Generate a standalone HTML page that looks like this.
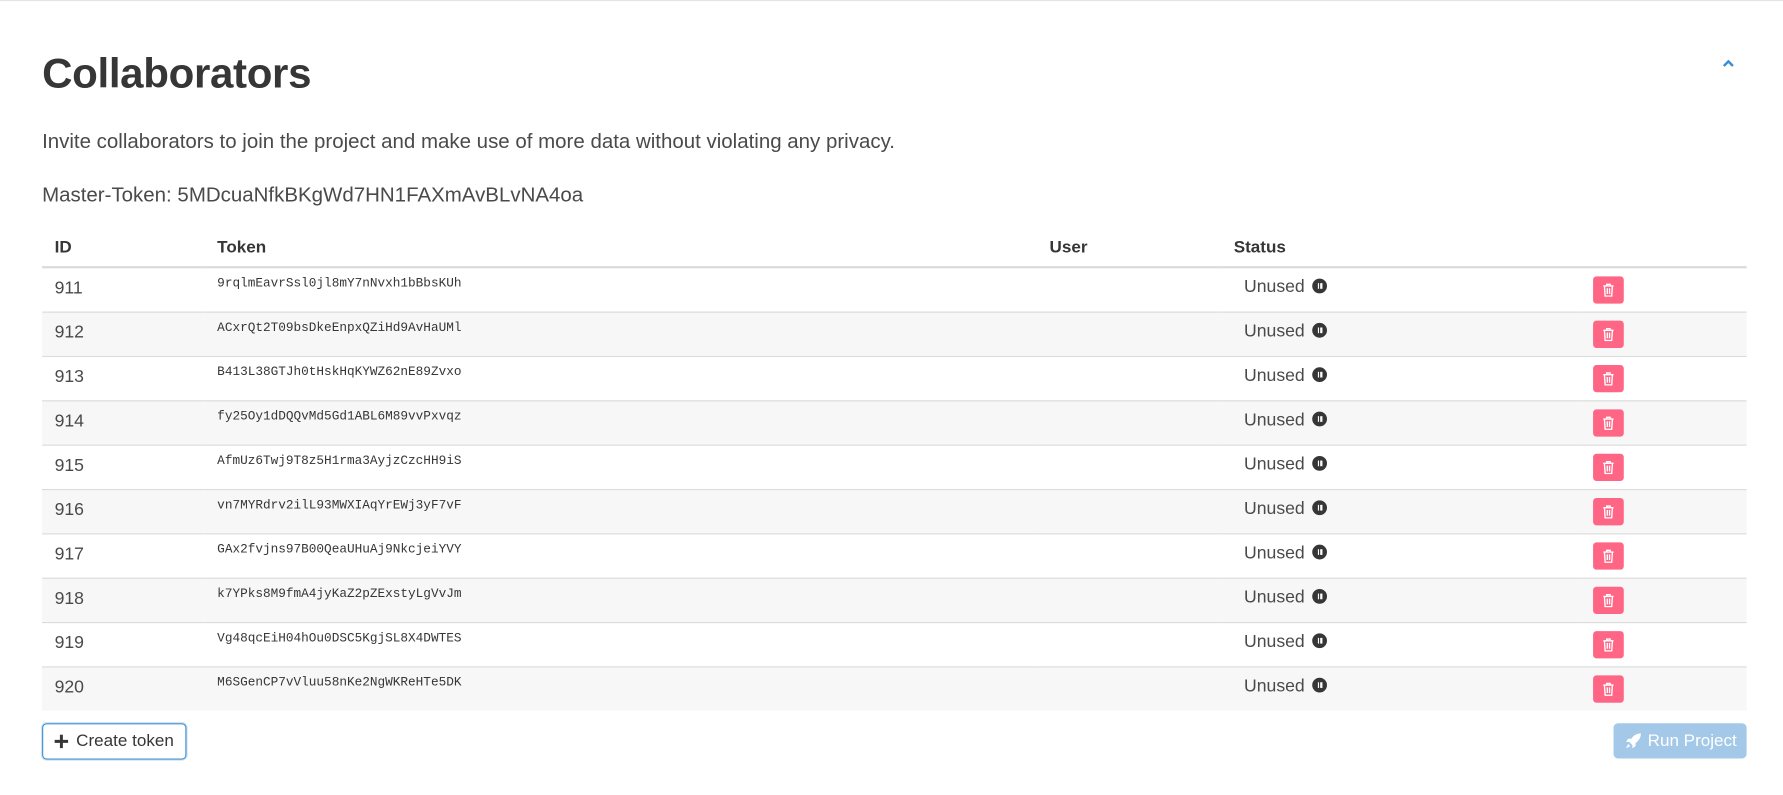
<!DOCTYPE html>
<html><head><meta charset="utf-8">
<style>
*{box-sizing:border-box;margin:0;padding:0}
html,body{width:1783px;height:795px;background:#fff;overflow:hidden}
body{font-family:"Liberation Sans",sans-serif;color:#363636;position:relative}
#w{position:absolute;left:0;top:0;width:1568px;height:700px;transform:scale(1.1371);transform-origin:0 0}
.topline{position:absolute;left:0;top:0;width:1568px;height:3px;border-top:1px solid #e4e4e4;}
h1{position:absolute;left:37px;top:44px;font-size:37px;font-weight:bold;color:#363636;letter-spacing:-0.3px}
.p{position:absolute;left:37px;font-size:18px;color:#4a4a4a}
.chev{position:absolute;left:1514px;top:52px}
table{position:absolute;left:37px;top:201px;width:1499px;border-collapse:collapse}
th{text-align:left;font-size:15px;font-weight:bold;color:#363636;height:34px;padding:0 11px;border-bottom:2px solid #dbdbdb;vertical-align:middle}
td{height:39px;border-bottom:1px solid #dbdbdb;vertical-align:top;padding:0 11px;font-size:15.5px;color:#4a4a4a}
tr:nth-child(odd) td{background:#f7f7f7}
tr:last-child td{border-bottom:none}
td.id{padding-top:9px}
td.tok{font-family:"Liberation Mono",monospace;font-size:11.2px;color:#363636;padding-top:8px}
td.st{padding-top:8px;padding-left:20px}
.pause{display:inline-block;width:13px;height:13px;border-radius:50%;background:#363636;vertical-align:-1px;margin-left:7px;position:relative}
.pause:before,.pause:after{content:"";position:absolute;top:4px;width:1.5px;height:5px;background:#fff}
.pause:before{left:4.5px}.pause:after{left:7px}
.del{display:inline-block;width:27px;height:24px;background:#ff6685;border-radius:3px;margin-top:7px;position:relative}
.del svg{position:absolute;left:8px;top:6px}
.btn1{position:absolute;left:37px;top:636px;width:127px;height:32px;border:1px solid #3e8ed0;border-radius:4px;box-shadow:0 0 0 1px rgba(62,142,208,.25);font-size:15px;color:#363636;padding-left:29px;line-height:30px}
.btn1 svg{position:absolute;left:10px;top:9px}
.btn2{position:absolute;left:1419px;top:636px;width:117px;height:31px;background:#a3c8e8;border-radius:4px;color:#fff;font-size:15px;line-height:31px;padding-left:30px}
.btn2 svg{position:absolute;left:10px;top:8px}
</style></head><body>
<div id="w">
<div class="topline"></div>
<h1>Collaborators</h1>
<svg class="chev" width="12" height="8" viewBox="0 0 12 8"><path d="M2 6 L6 2 L10 6" stroke="#3e8ed0" stroke-width="2.2" fill="none"/></svg>
<div class="p" style="top:114px">Invite collaborators to join the project and make use of more data without violating any privacy.</div>
<div class="p" style="top:161px">Master-Token: 5MDcuaNfkBKgWd7HN1FAXmAvBLvNA4oa</div>
<table>
<tr><th style="width:143px">ID</th><th style="width:732px">Token</th><th style="width:162px">User</th><th style="width:316px">Status</th><th></th></tr>
<tr><td class="id">911</td><td class="tok">9rqlmEavrSsl0jl8mY7nNvxh1bBbsKUh</td><td></td><td class="st">Unused<span class="pause"></span></td><td><span class="del"><svg width="11" height="12" viewBox="0 0 11 12"><path d="M1 2.5h9M4 2.5V1h3v1.5M2 2.5l.6 9h5.8l.6-9M4.5 4.5v5M6.5 4.5v5" stroke="#fff" stroke-width="1.2" fill="none"/></svg></span></td></tr>
<tr><td class="id">912</td><td class="tok">ACxrQt2T09bsDkeEnpxQZiHd9AvHaUMl</td><td></td><td class="st">Unused<span class="pause"></span></td><td><span class="del"><svg width="11" height="12" viewBox="0 0 11 12"><path d="M1 2.5h9M4 2.5V1h3v1.5M2 2.5l.6 9h5.8l.6-9M4.5 4.5v5M6.5 4.5v5" stroke="#fff" stroke-width="1.2" fill="none"/></svg></span></td></tr>
<tr><td class="id">913</td><td class="tok">B413L38GTJh0tHskHqKYWZ62nE89Zvxo</td><td></td><td class="st">Unused<span class="pause"></span></td><td><span class="del"><svg width="11" height="12" viewBox="0 0 11 12"><path d="M1 2.5h9M4 2.5V1h3v1.5M2 2.5l.6 9h5.8l.6-9M4.5 4.5v5M6.5 4.5v5" stroke="#fff" stroke-width="1.2" fill="none"/></svg></span></td></tr>
<tr><td class="id">914</td><td class="tok">fy25Oy1dDQQvMd5Gd1ABL6M89vvPxvqz</td><td></td><td class="st">Unused<span class="pause"></span></td><td><span class="del"><svg width="11" height="12" viewBox="0 0 11 12"><path d="M1 2.5h9M4 2.5V1h3v1.5M2 2.5l.6 9h5.8l.6-9M4.5 4.5v5M6.5 4.5v5" stroke="#fff" stroke-width="1.2" fill="none"/></svg></span></td></tr>
<tr><td class="id">915</td><td class="tok">AfmUz6Twj9T8z5H1rma3AyjzCzcHH9iS</td><td></td><td class="st">Unused<span class="pause"></span></td><td><span class="del"><svg width="11" height="12" viewBox="0 0 11 12"><path d="M1 2.5h9M4 2.5V1h3v1.5M2 2.5l.6 9h5.8l.6-9M4.5 4.5v5M6.5 4.5v5" stroke="#fff" stroke-width="1.2" fill="none"/></svg></span></td></tr>
<tr><td class="id">916</td><td class="tok">vn7MYRdrv2ilL93MWXIAqYrEWj3yF7vF</td><td></td><td class="st">Unused<span class="pause"></span></td><td><span class="del"><svg width="11" height="12" viewBox="0 0 11 12"><path d="M1 2.5h9M4 2.5V1h3v1.5M2 2.5l.6 9h5.8l.6-9M4.5 4.5v5M6.5 4.5v5" stroke="#fff" stroke-width="1.2" fill="none"/></svg></span></td></tr>
<tr><td class="id">917</td><td class="tok">GAx2fvjns97B00QeaUHuAj9NkcjeiYVY</td><td></td><td class="st">Unused<span class="pause"></span></td><td><span class="del"><svg width="11" height="12" viewBox="0 0 11 12"><path d="M1 2.5h9M4 2.5V1h3v1.5M2 2.5l.6 9h5.8l.6-9M4.5 4.5v5M6.5 4.5v5" stroke="#fff" stroke-width="1.2" fill="none"/></svg></span></td></tr>
<tr><td class="id">918</td><td class="tok">k7YPks8M9fmA4jyKaZ2pZExstyLgVvJm</td><td></td><td class="st">Unused<span class="pause"></span></td><td><span class="del"><svg width="11" height="12" viewBox="0 0 11 12"><path d="M1 2.5h9M4 2.5V1h3v1.5M2 2.5l.6 9h5.8l.6-9M4.5 4.5v5M6.5 4.5v5" stroke="#fff" stroke-width="1.2" fill="none"/></svg></span></td></tr>
<tr><td class="id">919</td><td class="tok">Vg48qcEiH04hOu0DSC5KgjSL8X4DWTES</td><td></td><td class="st">Unused<span class="pause"></span></td><td><span class="del"><svg width="11" height="12" viewBox="0 0 11 12"><path d="M1 2.5h9M4 2.5V1h3v1.5M2 2.5l.6 9h5.8l.6-9M4.5 4.5v5M6.5 4.5v5" stroke="#fff" stroke-width="1.2" fill="none"/></svg></span></td></tr>
<tr><td class="id">920</td><td class="tok">M6SGenCP7vVluu58nKe2NgWKReHTe5DK</td><td></td><td class="st">Unused<span class="pause"></span></td><td><span class="del"><svg width="11" height="12" viewBox="0 0 11 12"><path d="M1 2.5h9M4 2.5V1h3v1.5M2 2.5l.6 9h5.8l.6-9M4.5 4.5v5M6.5 4.5v5" stroke="#fff" stroke-width="1.2" fill="none"/></svg></span></td></tr>
</table>
<div class="btn1"><svg width="12" height="12" viewBox="0 0 12 12"><path d="M6 0v12M0 6h12" stroke="#363636" stroke-width="2.6"/></svg>Create token</div>
<div class="btn2"><svg width="15" height="15" viewBox="0 0 16 16"><path d="M15 1c-4 0-7 2-9 5H3L1 9h3l3 3v3l3-2v-3c3-2 5-5 5-9zM3 11l-2 4 4-2z" fill="#fff"/></svg>Run Project</div>
</div>
</body></html>
